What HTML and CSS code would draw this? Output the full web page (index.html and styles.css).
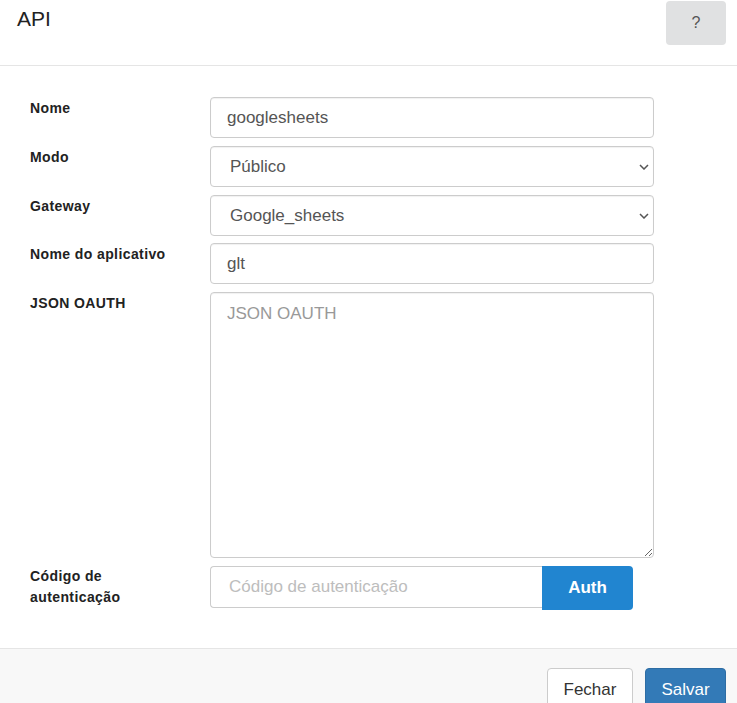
FILE: index.html
```html
<!DOCTYPE html>
<html lang="pt">
<head>
<meta charset="utf-8">
<link rel="stylesheet" href="styles.css">
</head>
<body>
<div class="modal">
  <div class="modal-header">
    <h1 class="title">API</h1>
    <button class="help-btn" type="button">?</button>
  </div>
  <div class="modal-body">
    <div class="row">
      <label class="label">Nome</label>
      <input class="field" type="text" value="googlesheets">
    </div>
    <div class="row">
      <label class="label">Modo</label>
      <div class="select-wrap">
        <select class="field select"><option>Público</option></select>
        <svg class="chevron" width="10" height="6" viewBox="0 0 10 6"><path d="M1 1 L5 5 L9 1" fill="none" stroke="#555" stroke-width="1.5"/></svg>
      </div>
    </div>
    <div class="row">
      <label class="label">Gateway</label>
      <div class="select-wrap">
        <select class="field select"><option>Google_sheets</option></select>
        <svg class="chevron" width="10" height="6" viewBox="0 0 10 6"><path d="M1 1 L5 5 L9 1" fill="none" stroke="#555" stroke-width="1.5"/></svg>
      </div>
    </div>
    <div class="row">
      <label class="label">Nome do aplicativo</label>
      <input class="field" type="text" value="glt">
    </div>
    <div class="row">
      <label class="label">JSON OAUTH</label>
      <textarea class="field textarea" placeholder="JSON OAUTH"></textarea>
    </div>
    <div class="row">
      <label class="label label-multi">Código de<br>autenticação</label>
      <div class="input-group">
        <input class="field group-input" type="text" placeholder="Código de autenticação">
        <button class="auth-btn" type="button">Auth</button>
      </div>
    </div>
  </div>
  <div class="modal-footer">
    <button class="btn btn-default" type="button">Fechar</button>
    <button class="btn btn-primary" type="button">Salvar</button>
  </div>
</div>
</body>
</html>
```

FILE: styles.css
```css
html, body {
  margin: 0;
  padding: 0;
  background: #fff;
  font-family: "Liberation Sans", Arial, sans-serif;
  color: #333;
}

.modal {
  width: 737px;
  height: 703px;
  overflow: hidden;
  display: flex;
  flex-direction: column;
}

.modal-header {
  flex: none;
  height: 66px;
  box-sizing: border-box;
  border-bottom: 1px solid #e5e5e5;
  display: flex;
  justify-content: space-between;
  align-items: flex-start;
  padding: 1px 11px 0 17px;
}

.title {
  margin: 5px 0 0 0;
  font-size: 21px;
  font-weight: normal;
  line-height: 26px;
  color: #222;
}

.help-btn {
  width: 60px;
  height: 44px;
  border: none;
  border-radius: 4px;
  background: #e0e1e2;
  color: #555;
  font-family: "Liberation Sans", Arial, sans-serif;
  font-size: 16px;
  padding: 0;
  cursor: pointer;
}

.modal-body {
  flex: none;
  padding: 31px 83px 0 30px;
  display: flex;
  flex-direction: column;
  gap: 7.75px;
  height: 582px;
  box-sizing: border-box;
}

.row {
  display: flex;
  align-items: flex-start;
}

.label {
  width: 180px;
  flex: none;
  font-size: 14px;
  font-weight: bold;
  letter-spacing: 0.4px;
  line-height: 20px;
  padding-top: 1px;
  color: #222;
}

.label-multi {
  line-height: 21px;
  padding-top: 0;
}

.field {
  box-sizing: border-box;
  width: 444px;
  height: 41px;
  border: 1px solid #ccc;
  border-radius: 4px;
  background: #fff;
  font-family: "Liberation Sans", Arial, sans-serif;
  font-size: 17px;
  color: #555;
  padding: 0 16px;
  outline: none;
  box-shadow: inset 0 1px 1px rgba(0,0,0,0.06);
}

.select-wrap {
  position: relative;
  width: 444px;
}

.select {
  -webkit-appearance: none;
  appearance: none;
  padding-left: 19px;
}

.chevron {
  position: absolute;
  right: 5px;
  top: 18px;
  pointer-events: none;
}

.textarea {
  height: 266px;
  padding: 11px 16px;
  resize: vertical;
  line-height: 20px;
}

.textarea::placeholder {
  color: #999;
}

.input-group {
  display: flex;
  align-items: flex-start;
}

.group-input {
  width: 332px;
  height: 42px;
  border-radius: 4px 0 0 4px;
  border-right: none;
  padding-left: 18px;
  box-shadow: none;
}

.group-input::placeholder {
  color: #bdbdbd;
}

.auth-btn {
  width: 91px;
  height: 44px;
  border: none;
  border-radius: 0 4px 4px 0;
  background: #2185d0;
  color: #fff;
  font-family: "Liberation Sans", Arial, sans-serif;
  font-size: 17px;
  font-weight: bold;
  padding: 0;
}

.modal-footer {
  flex: none;
  height: 80px;
  border-top: 1px solid #e5e5e5;
  background: #f8f8f8;
  display: flex;
  justify-content: flex-end;
  align-items: flex-start;
  gap: 12px;
  padding: 19px 11px 0 0;
}

.btn {
  height: 44px;
  border-radius: 4px;
  font-family: "Liberation Sans", Arial, sans-serif;
  font-size: 17px;
  padding: 0;
}

.btn-default {
  width: 86px;
  background: #fff;
  border: 1px solid #ccc;
  color: #333;
}

.btn-primary {
  width: 81px;
  background: #337ab7;
  border: 1px solid #2e6da4;
  color: #fff;
}
```
